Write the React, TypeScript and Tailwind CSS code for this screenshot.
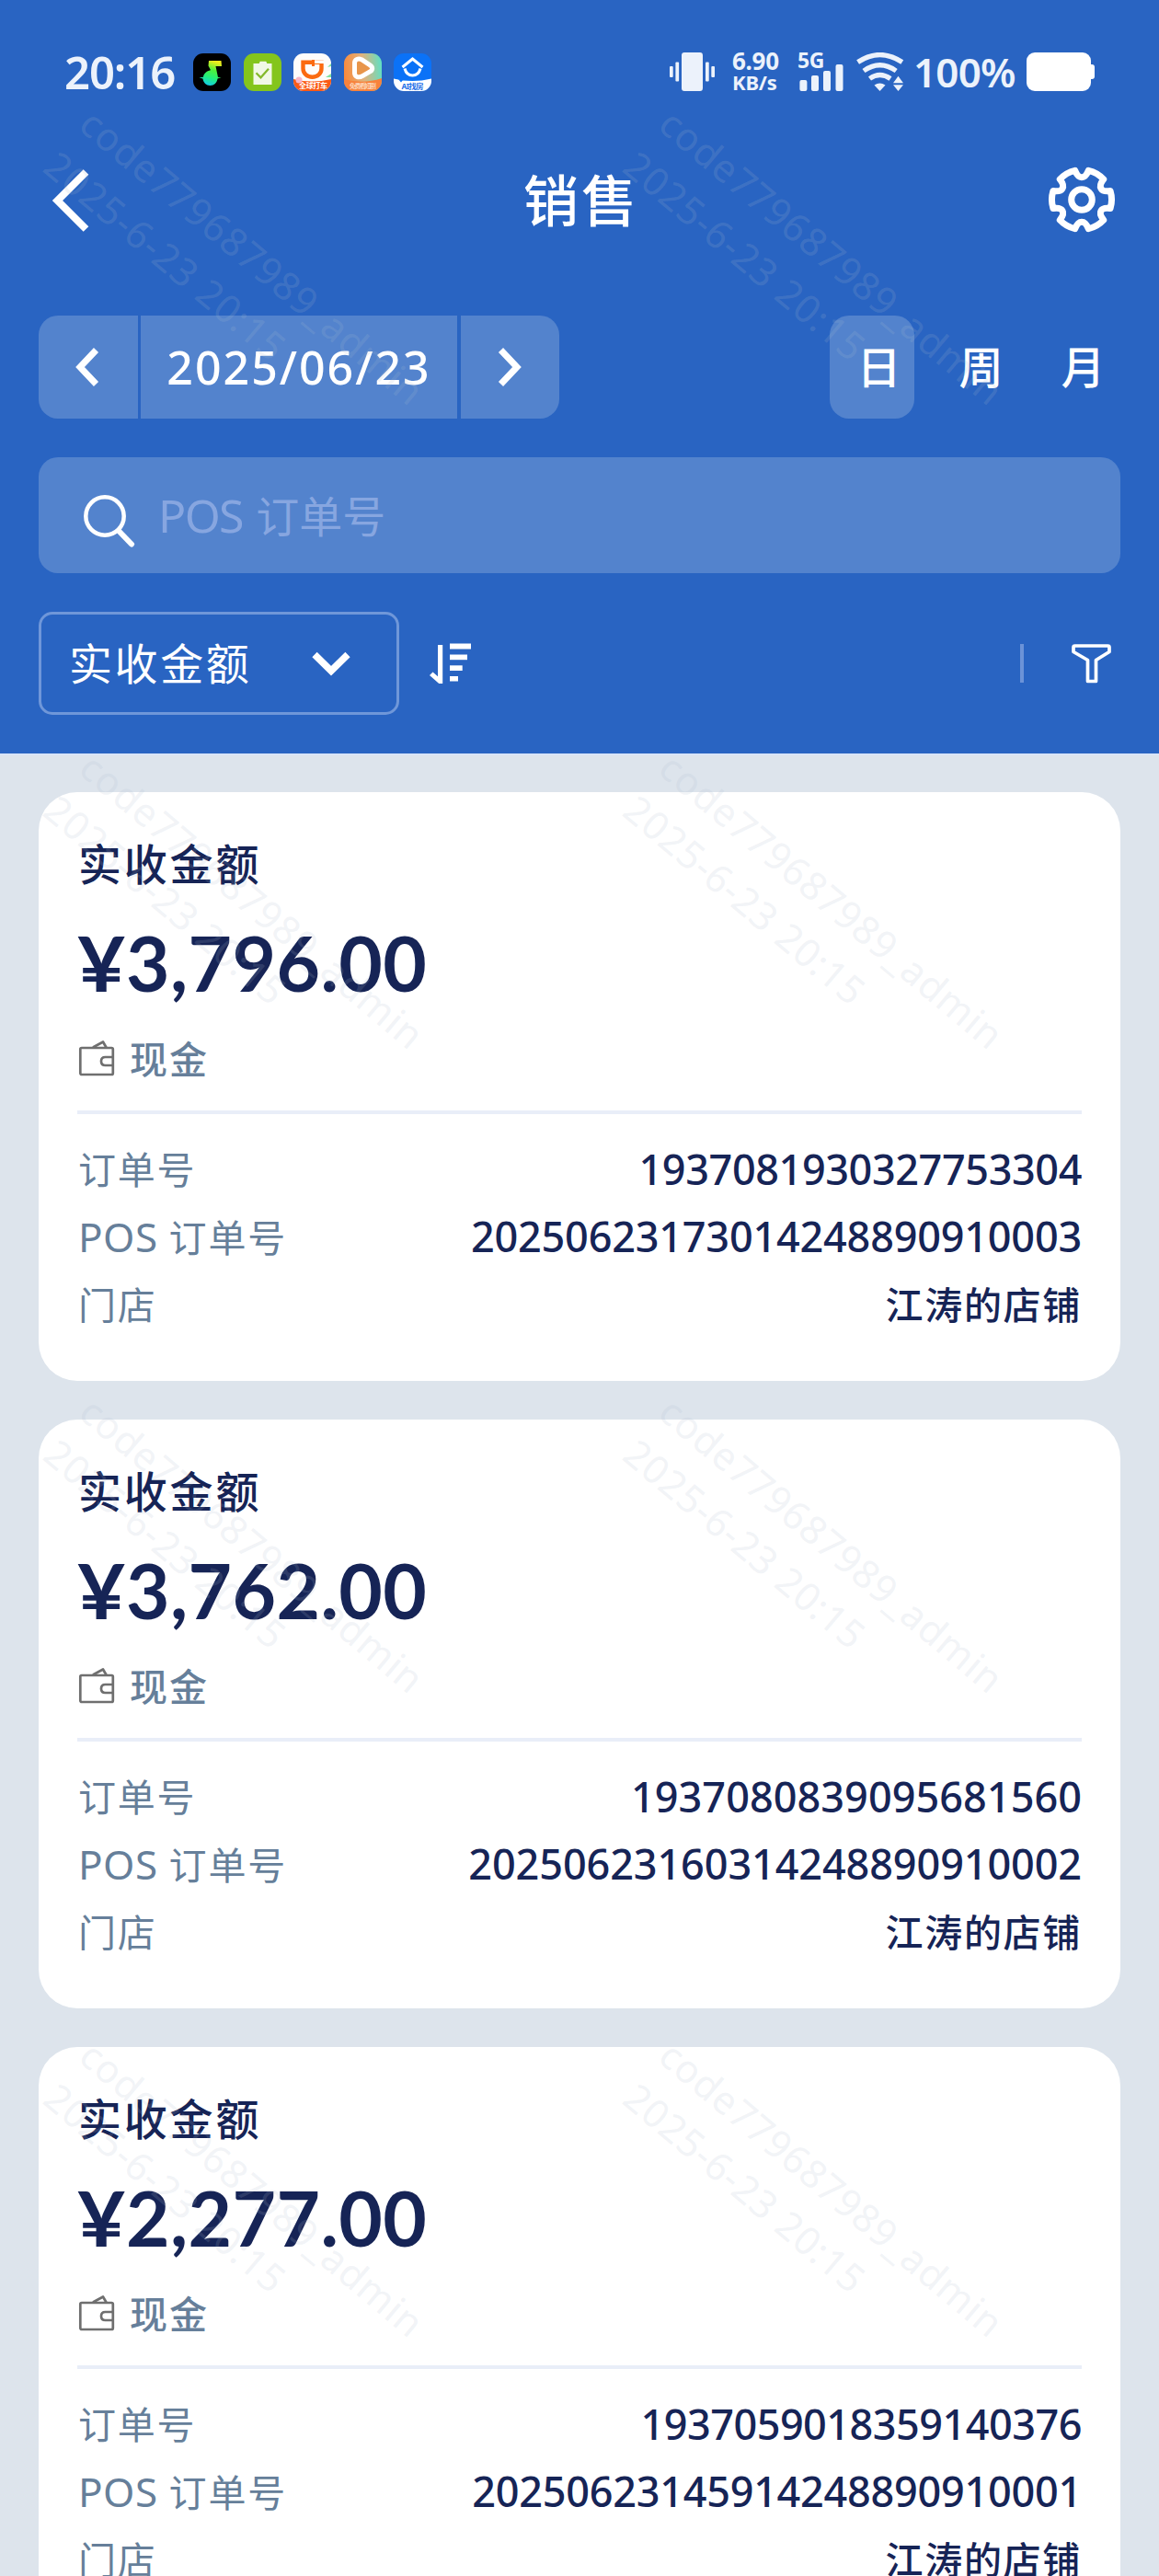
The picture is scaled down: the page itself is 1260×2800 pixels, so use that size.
import type { ReactNode } from 'react';

type Order = {
  amount: string;
  orderNo: string;
  orderNoSpacing: string;
  posNo: string;
  posNoSpacing: string;
};

const orders: Order[] = [
  {
    amount: '3,796.00',
    orderNo: '1937081930327753304',
    orderNoSpacing: 'tracking-[-0.4px]',
    posNo: '20250623173014248890910003',
    posNoSpacing: 'tracking-[-0.2px]',
  },
  {
    amount: '3,762.00',
    orderNo: '1937080839095681560',
    orderNoSpacing: 'tracking-[0.05px]',
    posNo: '20250623160314248890910002',
    posNoSpacing: 'tracking-[-0.1px]',
  },
  {
    amount: '2,277.00',
    orderNo: '1937059018359140376',
    orderNoSpacing: 'tracking-[-0.5px]',
    posNo: '20250623145914248890910001',
    posNoSpacing: 'tracking-[-0.25px]',
  },
];

const watermarkRows = [0, 1, 2, 3];

function AppIcons() {
  return (
    <div className="ml-[20px] flex gap-[13.6px]">
      <svg className="size-[41px] rounded-[11px]" viewBox="0 0 41 41">
        <defs>
          <linearGradient id="note" x1="0.6" y1="0" x2="0.3" y2="1">
            <stop offset="0" stopColor="#f2ea1c" />
            <stop offset="0.35" stopColor="#4df03c" />
            <stop offset="0.65" stopColor="#22f07a" />
            <stop offset="1" stopColor="#12c8f5" />
          </linearGradient>
        </defs>
        <rect width="41" height="41" fill="#000" />
        <path
          d="M17 8h13.5l.5 6h-6.500l2.500 12h3.500l-4 1.500c-.5 4.500-3.800 7.500-8 7.500s-7.500-3-8-7.500L6.500 26.300l4.500-.5c.5-4 3.500-6.500 8-7.500l-2.500-4.800z"
          fill="url(#note)"
        />
      </svg>
      <svg className="size-[41px] rounded-[11px]" viewBox="0 0 41 41">
        <rect width="41" height="41" fill="#84c51c" />
        <path d="M10.500 11h6.200l1-2.300h6.600l1 2.300h5.200v23h-20z" fill="#f1f8e6" />
        <path d="m13.500 21.300 5 5 8.500-9.500" fill="none" stroke="#84b92c" strokeWidth="2.200" />
      </svg>
      <svg className="size-[41px] rounded-[11px]" viewBox="0 0 41 41">
        <rect width="41" height="41" fill="#fdfcfb" />
        <path d="M0 28q20 5 41 0v13H0z" fill="#fb5a16" />
        <circle cx="6" cy="29" r="3.500" fill="#f7b6c8" />
        <path d="m37 15 4-4v3zM35 26l6-4v4z" fill="#7fe0a0" />
        <path
          d="M10.500 9.800h20v6.700c0 5.500-4.400 9.300-10 9.300s-10-3.800-10-9.300z"
          fill="none"
          stroke="#fb6a10"
          strokeWidth="4.400"
        />
        <path d="M20 7h3v7h-3z" fill="#fb6a10" />
        <path d="M23 7.500h10v3.500H23z" fill="#fdfcfb" />
        <text x="6" y="37.500" fontSize="8" fontWeight="700" fill="#fff" textLength="31" fontFamily='"Noto Sans CJK SC", sans-serif'>
          全球打车
        </text>
      </svg>
      <svg className="size-[41px] rounded-[11px]" viewBox="0 0 41 41">
        <defs>
          <linearGradient id="clip" x1="0" y1="0.4" x2="1" y2="0.300">
            <stop offset="0" stopColor="#f98a3c" />
            <stop offset="0.5" stopColor="#e0b27c" />
            <stop offset="1" stopColor="#5fe0c4" />
          </linearGradient>
        </defs>
        <rect width="41" height="41" fill="url(#clip)" />
        <path d="M0 28q20 6 41-1v14H0z" fill="#f8823c" />
        <path
          d="M11.500 10.500c0-4 4-5.300 7.500-3.800l9 6c3.500 2.300 3.500 5 .5 7l-8.500 5c-4 2.300-8 1-8.500-3z"
          fill="#e8954a"
          stroke="#fff"
          strokeWidth="5"
          strokeLinejoin="round"
        />
        <text x="6" y="37.500" fontSize="7" fontWeight="500" fill="#fde3cf" textLength="29" fontFamily='"Noto Sans CJK SC", sans-serif'>
          免费看短剧
        </text>
      </svg>
      <svg className="size-[41px] rounded-[11px]" viewBox="0 0 41 41">
        <rect width="41" height="41" fill="#0b72f7" />
        <path d="M0 27.500q20 5 41 0V41H0z" fill="#fff" />
        <path d="m5 28 3 3.500 2-2.500z" fill="#0b72f7" />
        <path d="m9.500 15 11-9 11 9" fill="none" stroke="#fff" strokeWidth="3" />
        <path d="M12 16.500c1.300 5 4.500 7.500 8.500 7.500s7.200-2.500 8.500-7.500" fill="none" stroke="#fff" strokeWidth="3" />
        <text x="8.500" y="39" fontSize="8.500" fontWeight="700" fill="#1f6fe8" textLength="24" fontFamily='"Noto Sans", "Noto Sans CJK SC", sans-serif'>
          AI找房
        </text>
      </svg>
    </div>
  );
}

function StatusBar() {
  return (
    <div className="flex h-[156px] items-center pl-[70px] pr-[70px] text-[#ecf2fb]">
      <span className="w-[120px] whitespace-nowrap text-[49px] font-semibold leading-[60px] tracking-[-1.100px]">20:16</span>
      <AppIcons />
      <svg className="ml-auto h-[42px] w-[49px]" viewBox="0 0 49 42" fill="currentColor">
        <rect x="13" width="23" height="42" rx="3" />
        <rect x="6.400" y="10.500" width="3.700" height="21" rx="1" />
        <rect x="0" y="15" width="3.700" height="12" rx="1" />
        <rect x="39" y="10.500" width="3.700" height="21" rx="1" />
        <rect x="45.300" y="15" width="3.700" height="12" rx="1" />
      </svg>
      <div className="ml-[19px] flex w-[53px] flex-col whitespace-nowrap font-bold">
        <span className="text-[26px] leading-[23px] tracking-[-0.300px]">6.90</span>
        <span className="text-[22px] leading-[23px] tracking-[-0.200px]">KB/s</span>
      </div>
      <div className="relative ml-[18px] h-[42px] w-[50px]">
        <span className="absolute left-0 top-[-3px] text-[23px] font-bold leading-[22px] tracking-[-0.500px]">5G</span>
        <svg className="h-[42px] w-[50px]" viewBox="0 0 50 42" fill="currentColor">
          <rect x="2.400" y="30" width="8" height="12" rx="2" />
          <rect x="15" y="25" width="8" height="17" rx="2" />
          <rect x="28" y="20" width="8" height="22" rx="2" />
          <rect x="41.500" y="13" width="8" height="29" rx="2" />
        </svg>
      </div>
      <svg className="ml-[14px] h-[42px] w-[52px]" viewBox="0 0 52 42" fill="none" stroke="currentColor" strokeWidth="5.200">
        <path d="M1.600 10.500Q25.500-5.500 49.800 10.500" />
        <path d="M8 20Q25.500 7.500 43.200 20" />
        <path d="M14.500 28.500Q25.500 20.500 37 28.500" />
        <path d="M19.500 35.500Q25.500 31.500 31.500 35.500L25.500 42z" fill="currentColor" stroke="none" />
        <path d="M40 33.300h11l-5.500-7.500zM40 35.300h11l-5.500 6.700z" fill="currentColor" stroke="none" />
      </svg>
      <span className="ml-[10px] w-[112px] whitespace-nowrap text-[44px] font-semibold leading-[60px] tracking-[-0.800px]">100%</span>
      <svg className="ml-[11px] h-[42px] w-[74px] shrink-0" viewBox="0 0 74 42" fill="#fff">
        <rect width="70" height="42" rx="9" />
        <rect x="64" y="13" width="10" height="16" rx="3" />
      </svg>
    </div>
  );
}

/** Six-toothed gear outline, centred on the origin. */
function gearPath() {
  const at = (deg: number, r: number) => {
    const a = (deg * Math.PI) / 180;
    return `${(Math.cos(a) * r).toFixed(2)} ${(Math.sin(a) * r).toFixed(2)}`;
  };
  let d = '';
  for (let k = 0; k < 6; k++) {
    const t = k * 60;
    d += `${k === 0 ? 'M' : 'L'}${at(t - 17, 32.5)}A32.5 32.5 0 0 1 ${at(t + 17, 32.5)}C${at(t + 21, 22)} ${at(t + 39, 22)} ${at(t + 43, 32.5)}`;
  }
  return `${d}Z`;
}

function TitleBar() {
  return (
    <div className="flex h-[124px] items-center justify-between pl-[52px] pr-[46px]">
      <svg className="h-[74px] w-[50px]" viewBox="0 0 50 74" fill="none" stroke="#fff" strokeWidth="8">
        <path d="M41.500 6 10.500 37l31 31" />
      </svg>
      <h1 className="ml-[24px] text-[60px] font-medium leading-[80px] tracking-[3px] text-white">销售</h1>
      <svg className="size-[76px]" viewBox="-38 -37 76 76" fill="none" stroke="#fff" strokeLinejoin="round">
        <path d={gearPath()} strokeWidth="7" />
        <circle r="11.300" strokeWidth="7" />
      </svg>
    </div>
  );
}

function Tab({ active, children }: { active?: boolean; children: ReactNode }) {
  return (
    <button
      className={`flex h-[112px] w-[92px] items-center justify-center rounded-[21px] pl-[15px] text-[48px] font-medium leading-[60px] text-white ${active ? 'bg-[#5383cd]' : ''}`}
    >
      {children}
    </button>
  );
}

function DateRow() {
  return (
    <div className="mt-[63px] flex items-center justify-between pl-[42px] pr-[44px]">
      <div className="flex h-[112px] gap-[3.500px] overflow-hidden rounded-[21px] text-white">
        <button className="flex w-[107.500px] items-center justify-center bg-[#5383cd]">
          <svg className="h-[44px] w-[28px]" viewBox="0 0 28 44" fill="none" stroke="currentColor" strokeWidth="7">
            <path d="M22.500 3.500 5 22l17.500 18.500" />
          </svg>
        </button>
        <div className="flex w-[344px] items-center justify-center bg-[#5383cd] text-[50px] font-medium leading-[60px] tracking-[2px]">
          2025/06/23
        </div>
        <button className="flex w-[107.500px] items-center justify-center bg-[#5383cd]">
          <svg className="h-[44px] w-[28px]" viewBox="0 0 28 44" fill="none" stroke="currentColor" strokeWidth="7">
            <path d="M4.500 3.500 22 22 4.500 40.500" />
          </svg>
        </button>
      </div>
      <div className="flex gap-[19px]">
        <Tab active>日</Tab>
        <Tab>周</Tab>
        <Tab>月</Tab>
      </div>
    </div>
  );
}

function SearchField() {
  return (
    <div className="mx-[42px] mt-[42px] flex h-[126px] items-center rounded-[21px] bg-[#5383cd] pl-[48px]">
      <svg className="mt-[11px] h-[58px] w-[58px]" viewBox="0 0 58 58" fill="none" stroke="#fff" strokeLinecap="round">
        <circle cx="24" cy="24" r="20.700" strokeWidth="4.500" />
        <path d="m40 41 13 13.500" strokeWidth="6" />
      </svg>
      <div className="ml-[24px] whitespace-pre text-[47px] leading-[60px] text-[#87a6e0]">
        <span className="text-[50px] tracking-[-1.600px]">POS </span>
        <span className="ml-[3px]">订单号</span>
      </div>
    </div>
  );
}

function FilterRow() {
  return (
    <div className="mx-[42px] mt-[42px] flex h-[112px] items-center">
      <button className="flex h-[112px] w-[392px] items-center rounded-[15px] border-3 border-[#6f97d9] pl-[30px] text-white">
        <span className="text-[47px] leading-[60px] tracking-[2.600px]">实收金额</span>
        <svg className="ml-auto mr-[49px] h-[30px] w-[44px]" viewBox="0 0 44 30" fill="none" stroke="currentColor" strokeWidth="7.500">
          <path d="m4 5.500 18 17.700 18-17.700" />
        </svg>
      </button>
      <svg className="ml-[32px] h-[46px] w-[48px]" viewBox="0 0 48 46" fill="#fff">
        <path d="M10 3h5.200v42h-4L1 36l3.500-3.500 5.500 4.800z" />
        <rect x="23" y="1.500" width="23" height="6" />
        <rect x="23" y="13.500" width="19" height="5.700" />
        <rect x="23" y="25.300" width="13.700" height="5.700" />
        <rect x="23" y="37" width="9" height="5.500" />
      </svg>
      <span className="ml-auto h-[42px] w-[4px] bg-[#6b93d8]" />
      <svg className="ml-[51px] mr-[9px] h-[44px] w-[45px]" viewBox="0 0 45 44" fill="none" stroke="#fff" strokeWidth="3.700" strokeLinejoin="round">
        <path d="M4.500 3h36q1.500 0 1.500 1.500v5L27.500 18.500V41.500h-9V18.500L3 9.500v-5Q3 3 4.500 3z" />
      </svg>
    </div>
  );
}

function Row({ label, children, className }: { label: ReactNode; children: ReactNode; className?: string }) {
  return (
    <div className="flex h-[73.500px] items-center justify-between">
      <span className="whitespace-pre pl-[1px] text-[41px] leading-[60px] tracking-[1.800px] text-[#667f9a]">{label}</span>
      <span className={`font-medium leading-[60px] text-[#162456] ${className ?? ''}`}>{children}</span>
    </div>
  );
}

function OrderCard({ order }: { order: Order }) {
  return (
    <article className="h-[640px] shrink-0 rounded-[42px] bg-white px-[42px] pt-[38px]">
      <h2 className="flex h-[79px] items-center pl-[1px] text-[47px] font-medium leading-[60px] tracking-[2.800px] text-[#162456]">
        实收金额
      </h2>
      <p className="flex h-[131px] items-center pt-[4px] font-['Lato'] text-[82px] font-bold leading-[100px] tracking-[0.400px] text-[#162456]">
        <span className="mr-[5px] inline-block origin-left scale-x-110">¥</span>
        {order.amount}
      </p>
      <div className="flex h-[84px] items-center">
        <svg className="h-[42px] w-[42px]" viewBox="0 0 42 42" fill="none" stroke="#6f6f6f" strokeWidth="2.700" strokeLinejoin="round">
          <rect x="3.300" y="9" width="35.500" height="29" rx="1.500" />
          <path d="m17 8.500 11-6 3.500 6M38.500 19H30.500q-4.500 0-4.500 4.500t4.500 4.500h8" />
        </svg>
        <span className="ml-[15px] text-[41px] font-medium leading-[60px] tracking-[2px] text-[#667f9a]">现金</span>
      </div>
      <hr className="mb-[23px] mt-[14px] h-[4px] border-0 bg-[#e9eef8]" />
      <Row label="订单号" className={`text-[45px] ${order.orderNoSpacing}`}>
        {order.orderNo}
      </Row>
      <Row
        label={
          <>
            <span className="text-[44px] tracking-[0.500px]">POS </span>订单号
          </>
        }
        className={`text-[45px] ${order.posNoSpacing}`}
      >
        {order.posNo}
      </Row>
      <Row label="门店" className="text-[41px] tracking-[1.700px]">
        江涛的店铺
      </Row>
    </article>
  );
}

function Watermark({ row }: { row: number }) {
  return (
    <div className="flex h-[700px] shrink-0">
      {[0, 1].map((col) => (
        <div key={`${row}-${col}`} className="w-[630px] shrink-0 pl-[113px] pt-[104px]">
          <div className="w-max origin-top-left rotate-40 whitespace-nowrap text-[42px] leading-[60px] tracking-[0.900px] text-[rgba(172,189,205,0.18)]">
            code779687989_admin
            <br />
            2025-6-23 20:15
          </div>
        </div>
      ))}
    </div>
  );
}

export default function App() {
  return (
    <div className="relative flex h-[2800px] w-[1260px] flex-col overflow-hidden bg-[#dde4ec] font-['Noto_Sans','Noto_Sans_CJK_SC',sans-serif]">
      <header className="h-[819px] shrink-0 bg-[#2964c2]">
        <StatusBar />
        <TitleBar />
        <DateRow />
        <SearchField />
        <FilterRow />
      </header>
      <main className="flex flex-col gap-[42px] border-t-2 border-[#d8e4f8] px-[42px] pt-[40px]">
        {orders.map((order) => (
          <OrderCard key={order.orderNo} order={order} />
        ))}
      </main>
      <div className="pointer-events-none absolute inset-0 overflow-hidden" aria-hidden="true">
        {watermarkRows.map((row) => (
          <Watermark key={row} row={row} />
        ))}
      </div>
    </div>
  );
}
